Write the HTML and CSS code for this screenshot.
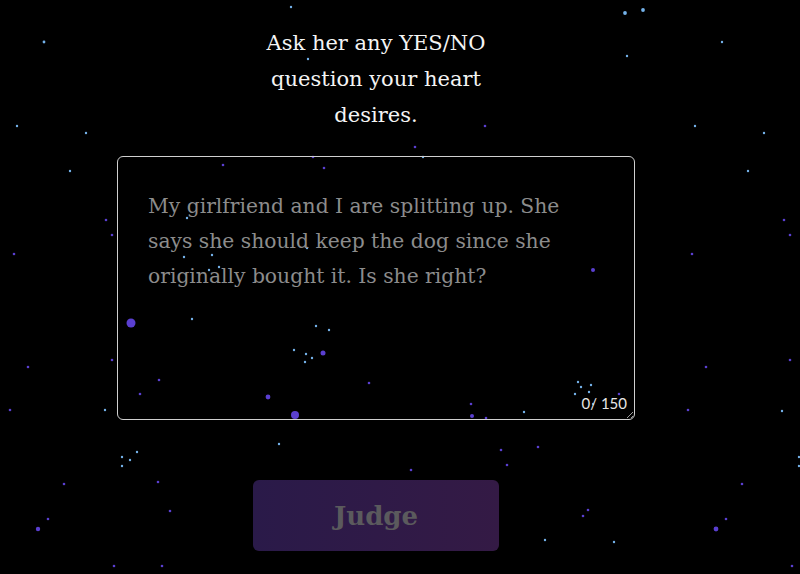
FILE: index.html
```html
<!DOCTYPE html>
<html lang="en">
<head>
<meta charset="utf-8">
<title>Ask her</title>
<link rel="stylesheet" href="styles.css">
</head>
<body>
<svg class="stars" width="800" height="574" viewBox="0 0 800 574" aria-hidden="true">
  <g class="cyan">
    <circle cx="44" cy="42" r="1.4"/><circle cx="17" cy="126" r="1.2"/><circle cx="86" cy="133" r="1.2"/>
    <circle cx="625" cy="13" r="1.9"/><circle cx="643" cy="10" r="1.9"/><circle cx="627" cy="56" r="1.2"/>
    <circle cx="722" cy="42" r="1.2"/><circle cx="695" cy="126" r="1.2"/><circle cx="764" cy="133" r="1.2"/>
    <circle cx="748" cy="171" r="1.2"/><circle cx="70" cy="171" r="1.2"/><circle cx="105" cy="410" r="1.2"/>
    <circle cx="782" cy="411" r="1.2"/><circle cx="122" cy="457" r="1.2"/><circle cx="137" cy="452" r="1.2"/>
    <circle cx="130" cy="460" r="1.2"/><circle cx="122" cy="466" r="1.2"/><circle cx="545" cy="540" r="1.2"/>
    <circle cx="614" cy="542" r="1.2"/><circle cx="799" cy="457" r="1.2"/><circle cx="799" cy="466" r="1.2"/>
    <circle cx="192" cy="319" r="1.2"/><circle cx="316" cy="326" r="1.2"/><circle cx="329" cy="330" r="1.2"/>
    <circle cx="294" cy="350" r="1.2"/><circle cx="306" cy="354" r="1.2"/><circle cx="312" cy="358" r="1.2"/>
    <circle cx="305" cy="362" r="1.2"/><circle cx="524" cy="412" r="1.2"/><circle cx="291" cy="7" r="1.2"/>
    <circle cx="308" cy="59" r="1.2"/><circle cx="289" cy="77" r="1"/><circle cx="423" cy="157" r="1.2"/>
    <circle cx="187" cy="218" r="1.2"/><circle cx="212" cy="255" r="1.2"/><circle cx="184" cy="257" r="1.2"/>
    <circle cx="307" cy="248" r="1.2"/><circle cx="220" cy="247" r="1.2"/><circle cx="209" cy="270" r="1.2"/>
    <circle cx="219" cy="267" r="1.2"/><circle cx="578" cy="382" r="1.2"/><circle cx="581" cy="387" r="1.2"/>
    <circle cx="591" cy="385" r="1.2"/><circle cx="589" cy="392" r="1.2"/><circle cx="575" cy="394" r="1.2"/>
    <circle cx="593" cy="404" r="1.2"/><circle cx="279" cy="444" r="1.2"/>
  </g>
  <g class="purple">
    <circle cx="106" cy="220" r="1.3"/><circle cx="112" cy="235" r="1.3"/><circle cx="14" cy="254" r="1.3"/>
    <circle cx="112" cy="360" r="1.3"/><circle cx="28" cy="367" r="1.3"/><circle cx="10" cy="410" r="1.3"/>
    <circle cx="784" cy="220" r="1.3"/><circle cx="790" cy="235" r="1.3"/><circle cx="692" cy="254" r="1.3"/>
    <circle cx="790" cy="360" r="1.3"/><circle cx="706" cy="367" r="1.3"/><circle cx="688" cy="410" r="1.3"/>
    <circle cx="64" cy="484" r="1.3"/><circle cx="158" cy="482" r="1.3"/><circle cx="170" cy="511" r="1.3"/>
    <circle cx="48" cy="519" r="1.3"/><circle cx="38" cy="529" r="2.2"/><circle cx="114" cy="566" r="1.3"/>
    <circle cx="162" cy="566" r="1.3"/><circle cx="501" cy="450" r="1.3"/><circle cx="538" cy="447" r="1.3"/>
    <circle cx="507" cy="465" r="1.3"/><circle cx="588" cy="510" r="1.3"/><circle cx="583" cy="516" r="1.3"/>
    <circle cx="742" cy="484" r="1.3"/><circle cx="726" cy="519" r="1.3"/><circle cx="716" cy="529" r="2.4"/>
    <circle cx="792" cy="566" r="1.3"/><circle cx="323" cy="353" r="2.5"/><circle cx="159" cy="380" r="1.3"/>
    <circle cx="140" cy="394" r="1.3"/><circle cx="268" cy="397" r="2.4"/><circle cx="295" cy="415" r="4"/>
    <circle cx="369" cy="383" r="1.3"/><circle cx="471" cy="404" r="1.3"/><circle cx="472" cy="416" r="2"/>
    <circle cx="486" cy="418" r="1.3"/><circle cx="485" cy="126" r="1.3"/><circle cx="415" cy="147" r="1.3"/>
    <circle cx="313" cy="157" r="1.3"/><circle cx="223" cy="165" r="1.3"/><circle cx="324" cy="168" r="1.3"/>
    <circle cx="411" cy="470" r="1.3"/><circle cx="282" cy="511" r="1.6"/><circle cx="373" cy="508" r="1.3"/>
    <circle cx="442" cy="543" r="1.3"/><circle cx="619" cy="394" r="1.3"/><circle cx="593" cy="270" r="2"/>
    <circle cx="131" cy="323" r="4.5"/>
  </g>
</svg>
<main class="page">
  <h1 class="prompt">Ask her any YES/NO question your heart desires.</h1>
  <div class="field">
    <textarea class="question" maxlength="150" placeholder="My girlfriend and I are splitting up. She says she should keep the dog since she originally bought it. Is she right?"></textarea>
    <span class="counter">0/ 150</span>
  </div>
  <button class="judge" type="button" disabled>Judge</button>
</main>
</body>
</html>
```

FILE: styles.css
```css
* { box-sizing: border-box; }

html, body {
  margin: 0;
  height: 100%;
  background: #000;
  overflow: hidden;
}

body {
  font-family: "DejaVu Serif", "Liberation Serif", serif;
  color: #fff;
  position: relative;
}

.stars {
  position: absolute;
  left: 0;
  top: 0;
  pointer-events: none;
}

.stars .cyan circle { fill: #74b2ea; }
.stars .purple circle { fill: #5a3fd0; }

.page {
  position: relative;
  width: 752px;
  display: flex;
  flex-direction: column;
  align-items: center;
  padding-top: 25px;
}

.prompt {
  margin: 0;
  width: 250px;
  font-size: 21px;
  font-weight: 400;
  line-height: 36px;
  text-align: center;
  color: #f4f4f4;
}

.field {
  position: relative;
  margin-top: 23px;
  width: 518px;
  height: 264px;
}

.question {
  display: block;
  width: 100%;
  height: 100%;
  margin: 0;
  padding: 32px 30px 29px;
  background: transparent;
  border: 1px solid #d0d0d0;
  border-radius: 6px;
  color: #fff;
  font-family: "DejaVu Serif", "Liberation Serif", serif;
  font-size: 20.3px;
  line-height: 35px;
  outline: none;
  resize: both;
}

.question::placeholder {
  color: #8c8c8c;
}

.counter {
  position: absolute;
  right: 8px;
  bottom: 8px;
  font-family: Lato, "Noto Sans", sans-serif;
  font-size: 15px;
  color: #e6e6e6;
}

.judge {
  margin-top: 60px;
  width: 246px;
  height: 71px;
  border: none;
  border-radius: 6px;
  background: linear-gradient(90deg, #2a1a49, #341a45);
  color: #5b5a5d;
  font-family: "DejaVu Serif", "Liberation Serif", serif;
  font-size: 26px;
  font-weight: 700;
  cursor: default;
}
```
